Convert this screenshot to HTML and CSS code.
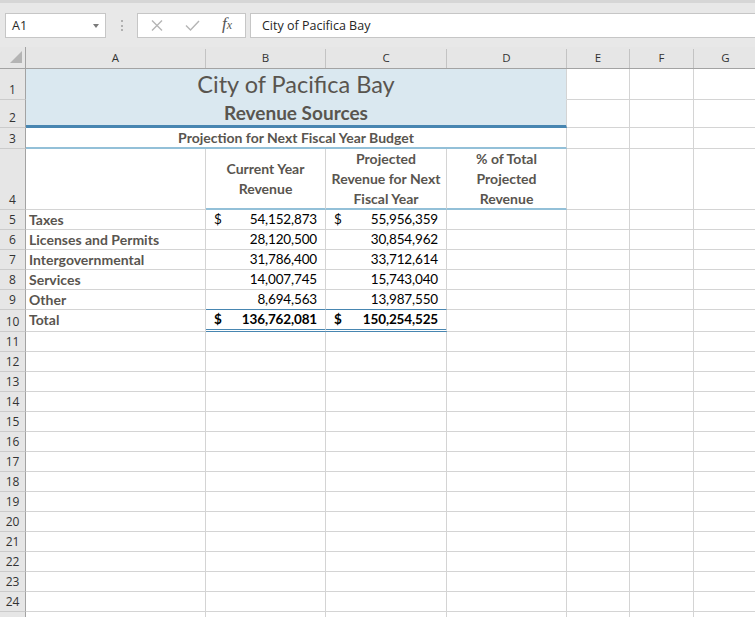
FILE: index.html
```html
<!DOCTYPE html>
<html lang="en">
<head>
    <meta charset="UTF-8">
    <title>City of Pacifica Bay - Revenue Sources</title>
    <link rel="stylesheet" href="styles.css">
</head>
<body>

    <!-- Barra de formulas -->
    <div class="toolbar">
        <div class="namebox"><span>A1</span><i class="caret"></i></div>
        <div class="grip"><i></i><i></i><i></i></div>
        <div class="fbuttons">
            <svg class="ico cancel" width="12" height="11" viewBox="0 0 12 11"><path d="M1 0.5L11 10.5M11 0.5L1 10.5"/></svg>
            <svg class="ico enter" width="15" height="11" viewBox="0 0 15 11"><path d="M1 5.5L5.5 10L14 1"/></svg>
            <span class="fx">f<small>x</small></span>
        </div>
        <div class="formula">City of Pacifica Bay</div>
    </div>

    <div class="sheet">
        <div class="row hdr">
            <div class="corner"><svg width="26" height="19" viewBox="0 0 26 19"><polygon points="22,4 22,16 10,16"/></svg></div>
            <div>A</div><div>B</div><div>C</div><div>D</div><div>E</div><div>F</div><div>G</div>
        </div>

        <div class="row r1">
            <div class="rh">1</div>
            <div class="c band title">City of Pacifica Bay</div>
            <div></div><div></div><div></div>
        </div>
        <div class="row r2">
            <div class="rh">2</div>
            <div class="c band subtitle">Revenue Sources</div>
            <div></div><div></div><div></div>
        </div>
        <div class="row r3">
            <div class="rh">3</div>
            <div class="c band heading3">Projection for Next Fiscal Year Budget</div>
            <div></div><div></div><div></div>
        </div>
        <div class="row r4">
            <div class="rh">4</div>
            <div></div>
            <div class="c colhead">Current Year Revenue</div>
            <div class="c colhead">Projected Revenue for Next Fiscal Year</div>
            <div class="c colhead">% of Total Projected Revenue</div>
            <div></div><div></div><div></div>
        </div>

        <div class="row">
            <div class="rh">5</div>
            <div class="c label">Taxes</div>
            <div class="c acct"><span>$</span><span>54,152,873</span></div>
            <div class="c acct"><span>$</span><span>55,956,359</span></div>
            <div></div><div></div><div></div><div></div>
        </div>
        <div class="row">
            <div class="rh">6</div>
            <div class="c label">Licenses and Permits</div>
            <div class="c num">28,120,500</div>
            <div class="c num">30,854,962</div>
            <div></div><div></div><div></div><div></div>
        </div>
        <div class="row">
            <div class="rh">7</div>
            <div class="c label">Intergovernmental</div>
            <div class="c num">31,786,400</div>
            <div class="c num">33,712,614</div>
            <div></div><div></div><div></div><div></div>
        </div>
        <div class="row">
            <div class="rh">8</div>
            <div class="c label">Services</div>
            <div class="c num">14,007,745</div>
            <div class="c num">15,743,040</div>
            <div></div><div></div><div></div><div></div>
        </div>
        <div class="row">
            <div class="rh">9</div>
            <div class="c label">Other</div>
            <div class="c num before-total">8,694,563</div>
            <div class="c num before-total">13,987,550</div>
            <div></div><div></div><div></div><div></div>
        </div>
        <div class="row r10">
            <div class="rh">10</div>
            <div class="c label">Total</div>
            <div class="c acct total"><span>$</span><span>136,762,081</span></div>
            <div class="c acct total"><span>$</span><span>150,254,525</span></div>
            <div></div><div></div><div></div><div></div>
        </div>

        <!-- Linhas vazias -->
        <div class="row"><div class="rh">11</div><div></div><div></div><div></div><div></div><div></div><div></div><div></div></div>
        <div class="row"><div class="rh">12</div><div></div><div></div><div></div><div></div><div></div><div></div><div></div></div>
        <div class="row"><div class="rh">13</div><div></div><div></div><div></div><div></div><div></div><div></div><div></div></div>
        <div class="row"><div class="rh">14</div><div></div><div></div><div></div><div></div><div></div><div></div><div></div></div>
        <div class="row"><div class="rh">15</div><div></div><div></div><div></div><div></div><div></div><div></div><div></div></div>
        <div class="row"><div class="rh">16</div><div></div><div></div><div></div><div></div><div></div><div></div><div></div></div>
        <div class="row"><div class="rh">17</div><div></div><div></div><div></div><div></div><div></div><div></div><div></div></div>
        <div class="row"><div class="rh">18</div><div></div><div></div><div></div><div></div><div></div><div></div><div></div></div>
        <div class="row"><div class="rh">19</div><div></div><div></div><div></div><div></div><div></div><div></div><div></div></div>
        <div class="row"><div class="rh">20</div><div></div><div></div><div></div><div></div><div></div><div></div><div></div></div>
        <div class="row"><div class="rh">21</div><div></div><div></div><div></div><div></div><div></div><div></div><div></div></div>
        <div class="row"><div class="rh">22</div><div></div><div></div><div></div><div></div><div></div><div></div><div></div></div>
        <div class="row"><div class="rh">23</div><div></div><div></div><div></div><div></div><div></div><div></div><div></div></div>
        <div class="row"><div class="rh">24</div><div></div><div></div><div></div><div></div><div></div><div></div><div></div></div>
        <div class="row"><div class="rh"></div><div></div><div></div><div></div><div></div><div></div><div></div><div></div></div>
    </div>

</body>
</html>
```

FILE: styles.css
```css
/* Base */
* {
    margin: 0;
    padding: 0;
    box-sizing: border-box;
}

body {
    width: 755px;
    height: 617px;
    overflow: hidden;
    background-color: #fff;
    font-family: "Open Sans", "Noto Sans", sans-serif;
}

/* Barra de formulas */
.toolbar {
    height: 47px;
    display: flex;
    align-items: flex-start;
    padding-top: 10px;
    background-color: #e8e8e8;
    border-top: 3px solid #d6d6d6;
}

.namebox {
    width: 101px;
    height: 25px;
    margin-left: 5px;
    background-color: #fff;
    border: 1px solid #c6c6c6;
    display: flex;
    align-items: center;
    justify-content: space-between;
    padding: 0 6px 0 6px;
    font-size: 12.5px;
    color: #262626;
}

.caret {
    width: 0;
    height: 0;
    border-left: 3.5px solid transparent;
    border-right: 3.5px solid transparent;
    border-top: 4px solid #7a7a7a;
    margin-top: 1px;
}

.grip {
    width: 31px;
    height: 25px;
    display: flex;
    flex-direction: column;
    align-items: center;
    justify-content: center;
    gap: 2.5px;
}

.grip i {
    width: 2px;
    height: 2px;
    background-color: #b0b0b0;
}

.fbuttons {
    width: 109px;
    height: 25px;
    background-color: #fff;
    border: 1px solid #c6c6c6;
    display: flex;
    align-items: center;
}

.ico path {
    fill: none;
    stroke: #b5b5b5;
    stroke-width: 1.4;
}

.ico.cancel {
    margin-left: 13px;
}

.ico.enter {
    margin-left: 22px;
}

.fx {
    margin-left: 22px;
    margin-top: -3px;
    font-family: "Liberation Serif", serif;
    font-style: italic;
    font-size: 17px;
    color: #555;
}

.fx small {
    font-size: 12px;
}

.formula {
    flex: 1;
    height: 25px;
    margin-left: 4px;
    margin-right: -2px;
    background-color: #fff;
    border: 1px solid #c6c6c6;
    padding-left: 11px;
    font-size: 12.5px;
    line-height: 23px;
    color: #262626;
}

/* Planilha */
.row {
    display: grid;
    grid-template-columns: 26px 180px 120px 121px 120px 63px 64px 64px;
    height: 20px;
}

.row > div {
    border-right: 1px solid #d4d4d4;
    border-bottom: 1px solid #d4d4d4;
    overflow: hidden;
    white-space: nowrap;
}

.row.hdr {
    height: 22px;
    padding-top: 2px;
    background-color: #e6e6e6;
    border-bottom: 1px solid #a3a3a3;
}

.row.hdr > div {
    border-bottom: none;
    border-right-color: #c3c3c3;
    font-size: 11.5px;
    line-height: 18px;
    text-align: center;
    color: #333;
}

.row.hdr > .corner {
    border-right-color: #a3a3a3;
    margin-top: -2px;
}

.corner polygon {
    fill: #b4b4b4;
}

.rh {
    background-color: #e6e6e6;
    display: flex;
    align-items: flex-end;
    justify-content: center;
    font-size: 12px;
    line-height: 19px;
    color: #333;
}

.row > .rh {
    border-right-color: #a3a3a3;
    border-bottom-color: #cbcbcb;
}

.c {
    font-family: "Lato", sans-serif;
    font-size: 14px;
    line-height: 19px;
    color: #000;
    display: flex;
}

/* Titulos */
.r1 { height: 31px; }
.r2 { height: 28px; }
.r3 { height: 21px; }
.r4 { height: 61px; }
.r10 { height: 22px; }

.row > .band {
    grid-column: span 4;
    justify-content: center;
    color: #59554f;
}

.row > .title {
    background-color: #dae8f0;
    border-bottom-color: #dae8f0;
    font-size: 23.5px;
    line-height: 30px;
}

.row > .subtitle {
    background-color: #dae8f0;
    border-bottom: 3px solid #4886b1;
    font-size: 19px;
    font-weight: bold;
    line-height: 25px;
}

.row > .heading3 {
    border-bottom: 2px solid #93c0d8;
    font-weight: bold;
    line-height: 19px;
}

.row > .colhead {
    border-bottom: 2px solid #93c0d8;
    white-space: normal;
    text-align: center;
    align-items: center;
    justify-content: center;
    font-weight: bold;
    line-height: 20px;
    color: #59554f;
    padding: 0 2px;
}

/* Dados */
.label {
    padding-left: 3px;
    font-weight: bold;
    color: #59554f;
}

.acct,
.num {
    font-size: 13.5px;
    letter-spacing: -0.15px;
}

.acct {
    justify-content: space-between;
    padding: 0 8px 0 8px;
}

.num {
    justify-content: flex-end;
    padding-right: 8px;
}

.row > .before-total {
    border-bottom-color: #4886b1;
}

.row > .total {
    font-weight: bold;
    border-bottom: 3px double #4886b1;
}
```
